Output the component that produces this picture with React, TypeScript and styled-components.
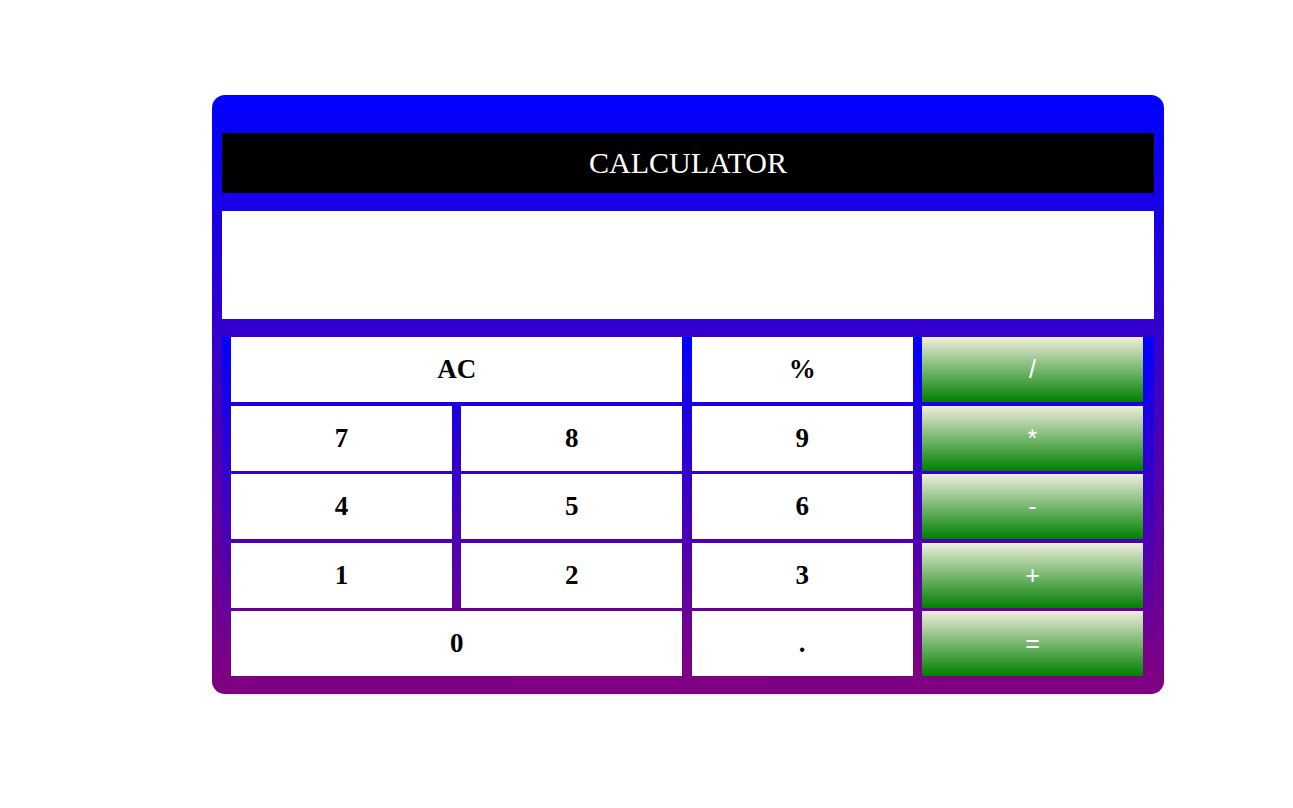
import React from "react";
import styled, { createGlobalStyle } from "styled-components";

const GlobalStyle = createGlobalStyle`
  body {
    margin: 0;
    background: #ffffff;
    font-family: "Liberation Serif", "Times New Roman", serif;
  }
`;

type Key = {
  label: string;
  span?: number;
  op?: boolean;
};

const keys: Key[] = [
  { label: "AC", span: 2 },
  { label: "%" },
  { label: "/", op: true },
  { label: "7" },
  { label: "8" },
  { label: "9" },
  { label: "*", op: true },
  { label: "4" },
  { label: "5" },
  { label: "6" },
  { label: "-", op: true },
  { label: "1" },
  { label: "2" },
  { label: "3" },
  { label: "+", op: true },
  { label: "0", span: 2 },
  { label: "." },
  { label: "=", op: true },
];

export default function App() {
  return (
    <Page>
      <GlobalStyle />
      <Calculator>
        <Title>CALCULATOR</Title>
        <Display />
        <Keypad>
          {keys.map((k) => (
            <KeyButton key={k.label} $span={k.span || 1} $op={!!k.op}>
              {k.label}
            </KeyButton>
          ))}
        </Keypad>
      </Calculator>
    </Page>
  );
}

const Page = styled.div`
  display: flex;
  padding-top: 95px;
  padding-left: 212px;
`;

const Calculator = styled.div`
  width: 952px;
  box-sizing: border-box;
  padding: 38px 10px 18px 10px;
  border-radius: 13px;
  background: linear-gradient(#0000ff, #800080);
  display: flex;
  flex-direction: column;
`;

const Title = styled.div`
  height: 60px;
  background: #000000;
  color: #ffffff;
  font-size: 30px;
  display: flex;
  align-items: center;
  justify-content: center;
`;

const Display = styled.div`
  height: 108px;
  margin-top: 18px;
  background: #ffffff;
`;

const Keypad = styled.div`
  margin-top: 18px;
  padding: 0 11px 0 9px;
  display: grid;
  grid-template-columns: repeat(4, 221px);
  grid-auto-rows: 65px;
  column-gap: 9.33px;
  row-gap: 3.5px;
  background: linear-gradient(#0000ff, #800080);
`;

const KeyButton = styled.button<{ $span: number; $op: boolean }>`
  grid-column: span ${(p) => p.$span};
  border: none;
  padding: 0;
  margin: 0;
  cursor: pointer;
  background: ${(p) =>
    p.$op ? "linear-gradient(#eeeedd, #008000)" : "#ffffff"};
  color: ${(p) => (p.$op ? "#ffffff" : "#000000")};
  font-family: ${(p) =>
    p.$op
      ? '"Liberation Sans", Arial, sans-serif'
      : '"Liberation Serif", "Times New Roman", serif'};
  font-weight: ${(p) => (p.$op ? 400 : 700)};
  font-size: ${(p) => (p.$op ? "25px" : "27px")};
`;
